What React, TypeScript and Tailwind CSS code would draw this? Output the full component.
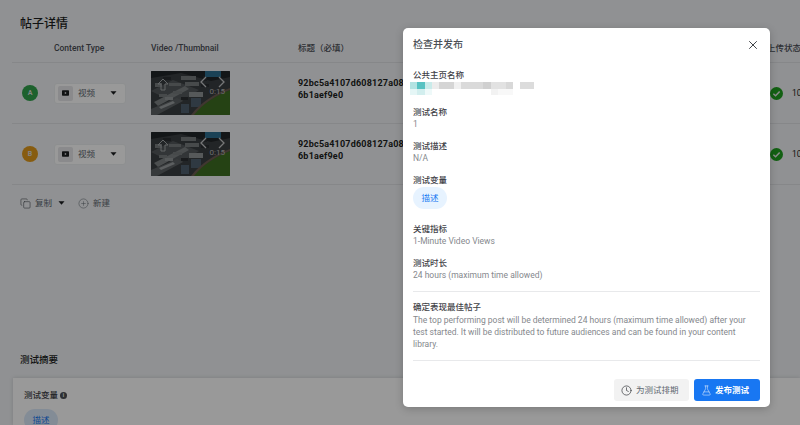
import { CirclePlus, Clock, Copy, FlaskConical, X } from "lucide-react";

const font = "font-['Roboto','Noto_Sans_CJK_SC',sans-serif]";

function Caret({ className }: { className: string }) {
  return (
    <svg viewBox="0 0 10 6" className={className} fill="currentColor">
      <path d="M0.5 0.5h9L5 5.5z" />
    </svg>
  );
}

function Thumb() {
  return (
    <div className="relative w-[79px] h-[44px] shrink-0 overflow-hidden rounded-[1px] bg-[#2f3336]">
      <svg viewBox="0 0 79 44" className="w-full h-full blur-[0.5px]">
        <rect width="79" height="44" fill="#3a3e41" />
        <path d="M0 7L30 2L60 10L79 6V0H0z" fill="#212528" />
        <path d="M0 20L22 9L48 19L26 33z" fill="#54595c" />
        <path d="M3 31L34 15L38 18L7 35z" fill="#7d8284" />
        <path d="M30 5h15v4H30zM18 12h12v3H18zM34 11h14v4H34zM4 12h7v4H4zM22 20h9v3h-9zM8 23h8v3H8z" fill="#777c7e" />
        <path d="M12 6h8v3h-8zM50 13h8v3h-8zM30 26h7v3h-7zM52 5h4v5h-4z" fill="#2a2e31" />
        <path d="M0 38L26 27L32 30L6 44H0z" fill="#5d6264" />
        <path d="M8 36l14-6 2 2-14 6z" fill="#9a9ea0" />
        <path d="M30 33h8v9h-8zM40 27h10v9H40z" fill="#4f5f6e" />
        <path d="M38 21h14v5H38zM14 26h8v3h-8z" fill="#8f9497" />
        <path d="M54 0h16v6H54z" fill="#2d6f8f" />
        <path d="M42 44C52 32 66 24 79 19V44z" fill="#3f6f22" />
        <path d="M40 44C50 31 65 22 79 17V19C66 24 52 32 43 44z" fill="#6b5c50" />
        <path d="M12 8l-5 5h3v6h4v-6h3z" fill="none" stroke="#a4a8aa" strokeWidth="1" />
        <path d="M55 6l-5 5 5 5M68 6l5 5-5 5" fill="none" stroke="#c4c6c8" strokeWidth="1.3" />
      </svg>
      <span className="absolute right-[5px] top-[16px] text-[8px] leading-[10px] text-[#b5b5b5]">0:15</span>
    </div>
  );
}

function Row({ letter, color }: { letter: string; color: string }) {
  return (
    <div className="flex items-center h-[61px] border-b border-[#dfe1e4] pl-[10px] w-[830px]">
      <div
        className={`w-4 h-4 rounded-full flex items-center justify-center text-[7px] font-bold text-[#dcdcdc] ${color}`}
      >
        {letter}
      </div>
      <div className="ml-4 w-[72px] h-[21px] rounded-[3px] bg-white border border-[#eceef0] flex items-center pl-[3px] pr-[8px]">
        <div className="w-[15px] h-[15px] rounded-[2px] bg-[#e6e7e9] flex items-center justify-center">
          <svg viewBox="0 0 10 8" className="w-[7px] h-[6px]">
            <rect width="10" height="8" rx="1" fill="#1c1e21" />
            <path d="M4 2.2l2.6 1.8L4 5.8z" fill="#e6e7e9" />
          </svg>
        </div>
        <span className="ml-[5px] text-[8.5px] text-[#606770]">视频</span>
        <Caret className="ml-auto w-[7px] h-[4px] text-[#1c1e21]" />
      </div>
      <div className="ml-[25px]">
        <Thumb />
      </div>
      <div className="ml-[68px] w-[472px] shrink-0 text-[9px] leading-[12px] font-bold text-[#1c1e21] tracking-[0.2px] self-start mt-[14px]">
        <div>92bc5a4107d608127a08</div>
        <div>6b1aef9e0</div>
      </div>
      <svg viewBox="0 0 14 14" className="w-[13px] h-[13px] shrink-0">
        <circle cx="7" cy="7" r="7" fill="#1fa01f" />
        <path d="M3.6 7.2l2.4 2.3 4.4-4.6" fill="none" stroke="#e8e8e8" strokeWidth="1.6" />
      </svg>
      <span className="ml-[9px] text-[8.5px] text-[#1c1e21]">100%</span>
    </div>
  );
}

function Field({ label, value, top }: { label: string; value: string; top: string }) {
  return (
    <div className={top}>
      <div className="text-[8.5px] leading-[12px] text-[#3f4247] font-medium">{label}</div>
      <div className="text-[8.5px] leading-[12px] text-[#85888d]">{value}</div>
    </div>
  );
}

const mosaic: [number, number, number, number, string][] = [
  [0, 0, 7, 7, "#b3e3e2"],
  [7, 0, 8, 7, "#57c2c2"],
  [15, 0, 7, 7, "#c9ebea"],
  [22, 0, 7, 7, "#ececec"],
  [29, 0, 15, 7, "#d5d5d5"],
  [44, 0, 7, 7, "#f0f0f0"],
  [51, 0, 22, 7, "#dadada"],
  [73, 0, 8, 7, "#d0d0d0"],
  [81, 0, 15, 7, "#e2e2e2"],
  [96, 0, 7, 7, "#d8d8d8"],
  [110, 0, 14, 7, "#dcdcdc"],
  [0, 7, 7, 6, "#e5f6f6"],
  [7, 7, 8, 6, "#d2eeee"],
  [15, 7, 7, 6, "#eef9f9"],
  [81, 7, 7, 6, "#f2f2f2"],
  [88, 7, 15, 6, "#f8f8f8"],
];

export default function App() {
  return (
    <div className={`relative w-[800px] h-[425px] overflow-hidden bg-[#f0f2f5] ${font}`}>
      <div className="flex flex-col h-full">
        <h2 className="shrink-0 mt-[16px] ml-5 text-[12px] leading-4 font-medium text-[#1c1e21]">帖子详情</h2>
        <div className="shrink-0 mt-[11px] ml-3 w-[830px] h-[19px] flex items-start pl-[42px] text-[8.5px] leading-[11px] font-medium text-[#4b4f56]">
          <span className="w-[97px]">Content Type</span>
          <span className="w-[147px]">Video /Thumbnail</span>
          <span className="w-[469px]">标题（必填）</span>
          <span>上传状态</span>
        </div>
        <div className="shrink-0 ml-3 border-t border-[#dfe1e4] w-[830px]">
          <Row letter="A" color="bg-[#31a24c]" />
          <Row letter="B" color="bg-[#e29a1c]" />
        </div>
        <div className="shrink-0 mt-[12px] ml-5 flex items-center text-[8.5px] leading-3 text-[#606770]">
          <Copy className="w-[11px] h-[11px] text-[#4b4f56]" strokeWidth={1.3} />
          <span className="ml-[4px]">复制</span>
          <Caret className="ml-[6px] w-[7px] h-[4px] text-[#1c1e21]" />
          <CirclePlus className="ml-[13px] w-[11px] h-[11px] text-[#606770]" strokeWidth={1.1} />
          <span className="ml-[4px]">新建</span>
        </div>
        <h3 className="shrink-0 mt-[144px] ml-5 text-[9.5px] leading-[14px] font-medium text-[#1c1e21]">测试摘要</h3>
        <div className="mt-[11px] ml-[13px] flex-1 basis-0 min-h-0 bg-white shadow-[0_0_4px_rgba(0,0,0,0.15)] pl-[11px] pt-[11px]">
          <div className="flex items-center text-[8.5px] leading-3 font-medium text-[#3f4247]">
            测试变量
            <span className="ml-[2px] w-[7px] h-[7px] rounded-full bg-[#4b4f56] text-white text-[5px] leading-[7px] text-center font-bold">i</span>
          </div>
          <div className="mt-[8px] w-[34px] h-[22px] rounded-full bg-[#dbe9fb] text-[8.5px] leading-[22px] text-center text-[#1877f2]">描述</div>
        </div>
      </div>

      <div className="absolute inset-0 bg-black/40" />

      <div className="absolute left-[403px] top-[28px] w-[367px] h-[379px] rounded-[5px] bg-white px-[10px] flex flex-col shadow-[0_2px_8px_rgba(0,0,0,0.2)]">
        <div className="flex items-center justify-between h-[33px]">
          <span className="text-[10px] leading-4 font-medium text-[#4b4f56]">检查并发布</span>
          <X className="w-[14px] h-[14px] text-[#33363a]" strokeWidth={1.6} />
        </div>
        <div className="mt-[8px] text-[8.5px] leading-[12px] text-[#3f4247] font-medium">公共主页名称</div>
        <svg viewBox="0 0 124 13" className="mt-[1px] -ml-[3px] w-[124px] h-[13px] blur-[0.6px]">
          {mosaic.map(([x, y, w, h, c]) => (
            <rect key={`${x}-${y}`} x={x} y={y} width={w} height={h} fill={c} />
          ))}
        </svg>
        <Field label="测试名称" value="1" top="mt-[11px]" />
        <Field label="测试描述" value="N/A" top="mt-[10px]" />
        <div className="mt-[10px] text-[8.5px] leading-[12px] text-[#3f4247] font-medium">测试变量</div>
        <div className="mt-[1px] w-[34px] h-[22px] rounded-full bg-[#e7f3ff] text-[8.5px] leading-[22px] text-center text-[#1877f2]">描述</div>
        <Field label="关键指标" value="1-Minute Video Views" top="mt-[14px]" />
        <Field label="测试时长" value="24 hours (maximum time allowed)" top="mt-[10px]" />
        <div className="mt-[10px] border-t border-[#e8e9eb]" />
        <div className="mt-[9px] text-[8.5px] leading-[12px] text-[#3f4247] font-medium">确定表现最佳帖子</div>
        <p className="mt-[1px] text-[8.5px] leading-[12px] text-[#85888d]">
          The top performing post will be determined 24 hours (maximum time allowed) after your test started. It will be distributed to future audiences and can be found in your content library.
        </p>
        <div className="mt-[10px] border-t border-[#e8e9eb]" />
        <div className="mt-[18px] flex justify-end gap-[5px]">
          <button className="w-[75px] h-[22px] rounded-[3px] bg-[#f2f2f2] flex items-center pl-[7px] gap-[4px] text-[8.5px] text-[#606770]">
            <Clock className="w-[11px] h-[11px] text-[#33363a]" strokeWidth={1.5} />
            为测试排期
          </button>
          <button className="w-[66px] h-[22px] rounded-[3px] bg-[#1877f2] flex items-center pl-[7px] gap-[3px] text-[8.5px] font-bold text-white">
            <FlaskConical className="w-[11px] h-[11px] text-[#dbe9fb]" strokeWidth={1.3} />
            发布测试
          </button>
        </div>
      </div>
    </div>
  );
}
